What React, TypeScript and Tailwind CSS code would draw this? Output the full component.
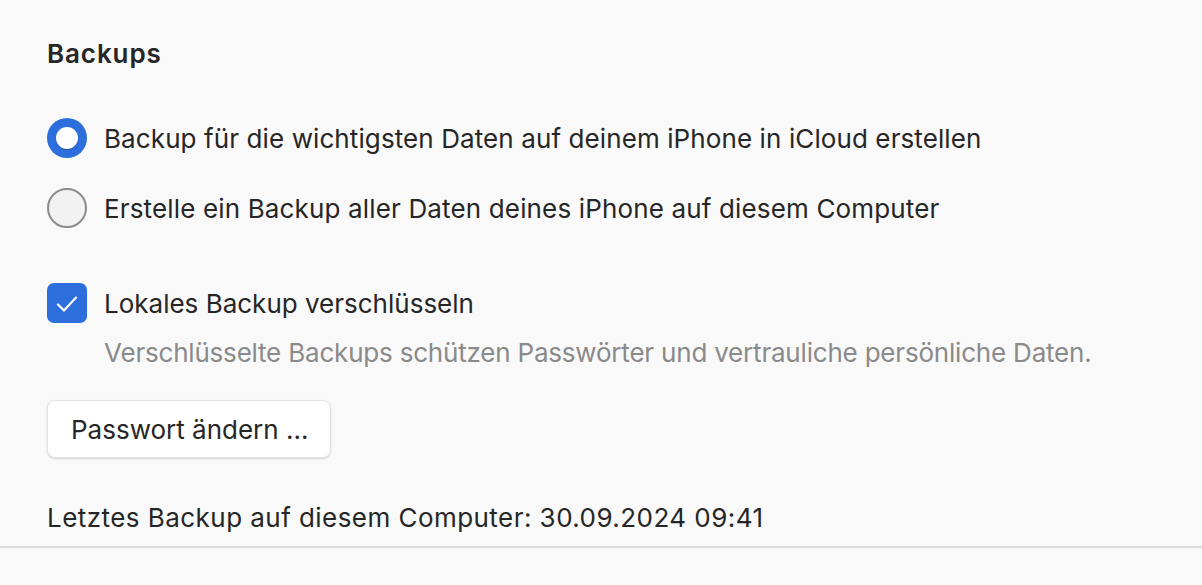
import React from 'react';

const font = { fontFamily: 'Inter, "Noto Sans", sans-serif' };

const Radio: React.FC<{ checked?: boolean }> = ({ checked }) =>
  checked ? (
    <span className="w-10 h-10 rounded-full bg-[#2c6fdc] flex items-center justify-center shrink-0">
      <span className="w-[22px] h-[22px] rounded-full bg-white shadow-[0_1px_1px_rgba(0,0,0,0.25)]" />
    </span>
  ) : (
    <span className="w-10 h-10 rounded-full border-2 border-[#8c8c8c] bg-[#f2f2f2] shrink-0" />
  );

const App: React.FC = () => {
  return (
    <div className="w-[1202px] h-[585px] bg-[#f9f9f9] text-[#262626] overflow-hidden" style={font}>
      <div className="pl-[47px] pt-[36px] h-[546px]">
        <h2 className="text-[26px] font-semibold leading-[36px] tracking-[0.9px]">Backups</h2>

        <div className="mt-[46px] flex flex-col gap-[30px]">
          <label className="flex items-center gap-[17px] h-10">
            <Radio checked />
            <span className="text-[26px] tracking-[0.1px]">Backup für die wichtigsten Daten auf deinem iPhone in iCloud erstellen</span>
          </label>
          <label className="flex items-center gap-[17px] h-10">
            <Radio />
            <span className="text-[26px] tracking-[0.15px]">Erstelle ein Backup aller Daten deines iPhone auf diesem Computer</span>
          </label>
        </div>

        <label className="mt-[55px] flex items-center gap-[17px] h-10">
          <span className="w-10 h-10 rounded-[7px] bg-[#2c6fdc] flex items-center justify-center shrink-0">
            <svg width="22" height="16" viewBox="0 0 22 16" fill="none" className="mt-[2px]">
              <path d="M2 8.5l6 6L20 1.5" stroke="white" strokeWidth="2.2" strokeLinecap="round" strokeLinejoin="round" />
            </svg>
          </span>
          <span className="text-[26px]">Lokales Backup verschlüsseln</span>
        </label>
        <p className="ml-[57px] mt-[15px] text-[26px] text-[#8a8a8a] leading-[30px] tracking-[-0.2px]">
          Verschlüsselte Backups schützen Passwörter und vertrauliche persönliche Daten.
        </p>

        <button className="mt-[32px] w-[284px] h-[58px] rounded-[8px] bg-white border border-[#e2e2e2] shadow-[0_1px_2px_rgba(0,0,0,0.15)] text-left pl-[23px] text-[26px] text-[#262626]">
          Passwort ändern ...
        </button>

        <p className="mt-[42px] text-[26px] leading-[36px] tracking-[0.45px]">Letztes Backup auf diesem Computer: 30.09.2024 09:41</p>
      </div>
      <div className="h-[2px] bg-[#dcdcdc]" />
    </div>
  );
};

export default App;
